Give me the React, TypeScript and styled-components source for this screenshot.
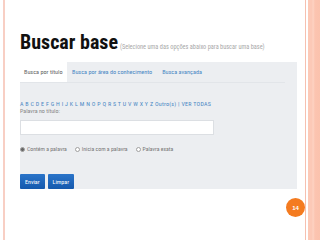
import React from 'react';
import styled, {createGlobalStyle} from 'styled-components';

const GlobalStyle = createGlobalStyle`
  html, body {
    margin: 0;
    padding: 0;
    background: #ffffff;
  }
  body {
    font-family: "Liberation Sans Narrow", "Roboto Condensed", "DejaVu Sans Condensed", "Liberation Sans", Arial, sans-serif;
  }
`;

const Frame = styled.div`
  width: 320px;
  height: 240px;
  display: flex;
  overflow: hidden;
  background: #ffffff;
`;

const LeftRule = styled.div`
  width: 2px;
  margin-left: 3px;
  background: #f8cfc4;
`;

const Slide = styled.div`
  flex: 1;
  display: flex;
  flex-direction: column;
  padding: 32px 0 0 15px;
`;

const RightRule = styled.div`
  width: 1px;
  background: #f6c0b0;
  margin-right: 2px;
`;

const Band = styled.div`
  width: 12px;
  background: linear-gradient(90deg, #fcc9b7 0, #fcc9b7 4px, #fdd3c3 5px, #fcc4b0 7px, #fbc2ad 100%);
`;

const TitleRow = styled.div`
  display: flex;
  align-items: baseline;
  gap: 2px;
  height: 30px;
`;

const Title = styled.h1`
  margin: 0;
  font-size: 20px;
  line-height: 20px;
  font-weight: bold;
  color: #111111;
`;

const Subtitle = styled.span`
  font-size: 6.3px;
  color: #a8a8a8;
`;

const Panel = styled.div`
  width: 277px;
  background: #eceef1;
  display: flex;
  flex-direction: column;
`;

const Tabs = styled.div`
  display: flex;
  height: 20px;
  margin-right: 12px;
  border-bottom: 1px solid #e2e5e9;
`;

const Tab = styled.div<{active?: boolean}>`
  display: flex;
  align-items: center;
  box-sizing: border-box;
  width: ${p => (p.active ? '47px' : 'auto')};
  padding-left: ${p => (p.active ? '4px' : '5px')};
  margin-right: ${p => (p.active ? '0' : '5px')};
  font-size: 6.2px;
  color: ${p => (p.active ? '#666666' : '#4a88c4')};
  background: ${p => (p.active ? '#ffffff' : 'transparent')};
`;

const Body = styled.div`
  display: flex;
  flex-direction: column;
  padding-top: 17px;
`;

const Letters = styled.div`
  font-size: 6px;
  color: #4a88c4;
  letter-spacing: 0.25px;
  line-height: 7px;
`;

const Label = styled.div`
  font-size: 6px;
  color: #888888;
  line-height: 7px;
`;

const Input = styled.div`
  margin-top: 6px;
  width: 192px;
  height: 13px;
  background: #ffffff;
  border: 1px solid #dcdfe3;
`;

const Radios = styled.div`
  display: flex;
  gap: 8px;
  margin-top: 11px;
  font-size: 5.8px;
  color: #777777;
`;

const Radio = styled.label`
  display: flex;
  align-items: center;
  gap: 2px;
`;

const Dot = styled.span<{checked?: boolean}>`
  width: 3px;
  height: 3px;
  border-radius: 50%;
  border: 0.7px solid #a0a0a0;
  background: ${p => (p.checked ? '#666666' : '#ffffff')};
`;

const Buttons = styled.div`
  display: flex;
  gap: 3px;
  margin-top: 22px;
`;

const Button = styled.div`
  height: 15px;
  padding: 0 5px;
  display: flex;
  align-items: center;
  font-size: 6px;
  color: #ffffff;
  background: linear-gradient(180deg, #2a74c9 0%, #1559ad 100%);
  border-radius: 1px;
`;

const Footer = styled.div`
  display: flex;
  justify-content: flex-end;
  margin-top: 9px;
`;

const PageNumber = styled.div`
  width: 19px;
  height: 19px;
  border-radius: 50%;
  background: #f47b20;
  color: #ffffff;
  font-family: "Liberation Sans", Arial, sans-serif;
  font-size: 6px;
  font-weight: bold;
  display: flex;
  align-items: center;
  justify-content: center;
`;

const letters = 'A B C D E F G H I J K L M N O P Q R S T U V W X Y Z';

export default function App() {
    return (
        <Frame>
            <GlobalStyle/>
            <LeftRule/>
            <Slide>
                <TitleRow>
                    <Title>Buscar base</Title>
                    <Subtitle>(Selecione uma das opções abaixo para buscar uma base)</Subtitle>
                </TitleRow>
                <Panel>
                    <Tabs>
                        <Tab active>Busca por título</Tab>
                        <Tab>Busca por área do conhecimento</Tab>
                        <Tab>Busca avançada</Tab>
                    </Tabs>
                    <Body>
                        <Letters>{letters} Outro(s) | VER TODAS</Letters>
                        <Label>Palavra no título:</Label>
                        <Input/>
                        <Radios>
                            <Radio><Dot checked/>Contém a palavra</Radio>
                            <Radio><Dot/>Inicia com a palavra</Radio>
                            <Radio><Dot/>Palavra exata</Radio>
                        </Radios>
                        <Buttons>
                            <Button>Enviar</Button>
                            <Button>Limpar</Button>
                        </Buttons>
                    </Body>
                </Panel>
                <Footer>
                    <PageNumber>14</PageNumber>
                </Footer>
            </Slide>
            <RightRule/>
            <Band/>
        </Frame>
    );
}
